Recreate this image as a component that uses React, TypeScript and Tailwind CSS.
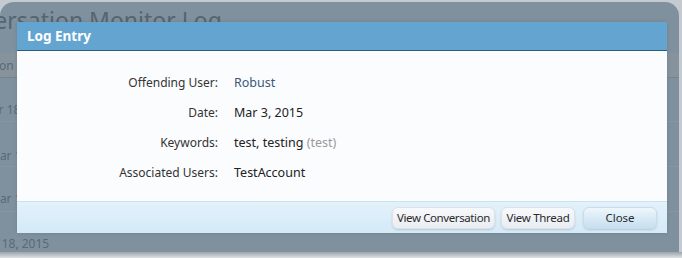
import React from 'react';

const rows = [
  { label: 'Offending User:', value: <span className="text-[#3a5878]">Robust</span> },
  { label: 'Date:', value: <span>Mar 3, 2015</span> },
  {
    label: 'Keywords:',
    value: (
      <span>
        test, testing <span className="text-[#9a9a9a]">(test)</span>
      </span>
    ),
  },
  { label: 'Associated Users:', value: <span>TestAccount</span> },
];

const App: React.FC = () => {
  return (
    <div
      className="relative w-[682px] h-[258px] overflow-hidden bg-[#c4cacf]"
      style={{ fontFamily: '"Noto Sans", "Open Sans", sans-serif' }}
    >
      {/* page behind the overlay */}
      <div className="mt-[2px] mr-[3px] h-[250px] rounded-t-[14px] bg-[#7f919e] overflow-hidden text-[#5a6975]">
        <div className="h-[30px] pt-[3px] text-[23px] leading-[30px] whitespace-nowrap ml-[-60px] text-[#56656f]">
          Conversation Monitor Log
        </div>
        <div className="mt-[21px] h-[25px] bg-[#86939c] border-b border-[#738490] text-[12px] leading-[25px] whitespace-nowrap ml-[-61px]">
          Conversation
        </div>
        <div className="h-[44px] border-b border-[#8896a1] text-[12px] leading-[64px] whitespace-nowrap ml-[-19px]">Mar 18, 2015</div>
        <div className="h-[45px] border-b border-[#8896a1] text-[12px] leading-[68px] whitespace-nowrap ml-[-11px]">Mar 18, 2015</div>
        <div className="h-[45px] border-b border-[#8896a1] text-[12px] leading-[64px] whitespace-nowrap ml-[-11px]">Mar 18, 2015</div>
        <div className="text-[12px] leading-[64px] whitespace-nowrap ml-[-24px]">Mar 18, 2015</div>
      </div>
      <div className="h-[6px] bg-gradient-to-b from-[#9ba4ab] to-[#dfe2e4]" />

      {/* dialog */}
      <div className="absolute left-[17px] top-[22px] w-[650px] h-[211px] flex flex-col shadow-[0_0_4px_rgba(0,0,0,0.12)]">
        <div className="h-[29px] bg-[#63a5d0] border-b border-[#2b5e7e] pl-[10px] text-white font-bold text-[13.5px] leading-[28px]">
          Log Entry
        </div>
        <div className="flex-1 bg-[#fbfcfe] pt-[17px]">
          <div className="grid grid-cols-[201px_1fr] gap-x-[16px] text-[12px] leading-[30px] text-[#222]">
            {rows.map((r) => (
              <React.Fragment key={r.label}>
                <div className="text-right text-[#333]">{r.label}</div>
                <div className="text-[12.5px]">{r.value}</div>
              </React.Fragment>
            ))}
          </div>
        </div>
        <div className="h-[32px] border-t border-[#c8e2f1] bg-gradient-to-b from-[#e3f2fb] to-[#d3eaf7] flex items-center justify-end gap-[6px] pr-[10px] text-[11.5px] text-[#2a2a2a]">
          <button className="h-[22px] w-[103px] rounded-[6px] border border-[#dde1e8] bg-gradient-to-b from-[#f8f9fc] to-[#e9ecf2] shadow-[0_1px_2px_rgba(0,0,0,0.15)] tracking-[-0.4px] whitespace-nowrap">
            View Conversation
          </button>
          <button className="h-[22px] w-[74px] rounded-[6px] border border-[#dde1e8] bg-gradient-to-b from-[#f8f9fc] to-[#e9ecf2] shadow-[0_1px_2px_rgba(0,0,0,0.15)] tracking-[-0.3px] whitespace-nowrap">
            View Thread
          </button>
          <button className="ml-[2px] h-[22px] w-[74px] rounded-[6px] border border-[#c8dcea] bg-gradient-to-b from-[#eef6fc] to-[#c6dfef] shadow-[0_1px_2px_rgba(0,0,0,0.15)]">
            Close
          </button>
        </div>
      </div>
    </div>
  );
};

export default App;
